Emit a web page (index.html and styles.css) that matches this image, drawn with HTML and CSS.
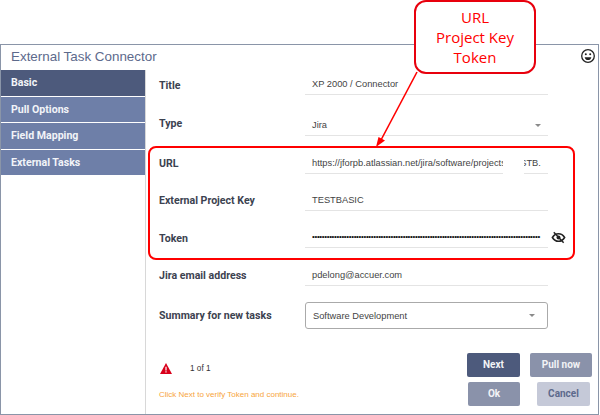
FILE: index.html
```html
<!DOCTYPE html>
<html lang="en">
<head>
<meta charset="utf-8">
<title>External Task Connector</title>
<link rel="stylesheet" href="styles.css">
</head>
<body>
<div class="dialog">
  <header class="head">
    <h1 class="title">External Task Connector</h1>
    <svg class="smile" viewBox="0 0 16 16" aria-hidden="true"><circle cx="8" cy="8" r="6.300" fill="none" stroke="#222" stroke-width="1.300"/><circle cx="5.800" cy="6.200" r="1" fill="#222"/><circle cx="10.200" cy="6.200" r="1" fill="#222"/><path d="M4.600 9.200h6.800c-.5 1.900-1.800 2.900-3.400 2.900s-2.900-1-3.400-2.900z" fill="#222"/></svg>
  </header>
  <div class="body">
    <nav class="side">
      <div class="tab tab-active">Basic</div>
      <div class="tab">Pull Options</div>
      <div class="tab">Field Mapping</div>
      <div class="tab">External Tasks</div>
    </nav>
    <main class="main">
      <div class="row row-title"><span class="label">Title</span><div class="field">XP 2000 / Connector</div></div>
      <div class="row row-type"><span class="label">Type</span><div class="field">Jira<i class="caret"></i></div></div>
      <div class="row row-url"><span class="label">URL</span><div class="field field-url"><span class="clip">https://jforpb.atlassian.net/jira/software/projects/TESTB.</span><i class="patch"></i></div></div>
      <div class="row"><span class="label">External Project Key</span><div class="field">TESTBASIC</div></div>
      <div class="row row-token"><span class="label">Token</span><div class="field"><span class="clip dots">•••••••••••••••••••••••••••••••••••••••••••••••••••••••••••••••••••••••••••••••••••••••••••••</span>
        <svg class="eye" viewBox="0 0 16 16" aria-hidden="true"><path d="M1.500 8c1.600-2.700 3.800-4 6.500-4s4.900 1.300 6.500 4c-1.600 2.700-3.800 4-6.500 4S3.100 10.700 1.500 8z" fill="none" stroke="#222" stroke-width="1.700"/><circle cx="8" cy="8" r="2.100" fill="#222"/><path d="M3 2.500l10.500 11" stroke="#222" stroke-width="1.600"/></svg></div></div>
      <div class="row row-email"><span class="label">Jira email address</span><div class="field">pdelong@accuer.com</div></div>
      <div class="row row-summary"><span class="label">Summary for new tasks</span><div class="select">Software Development<i class="caret"></i></div></div>
      <footer class="foot">
        <div class="status">
          <div class="count">
            <svg class="warn" viewBox="0 0 12 11" aria-hidden="true"><path d="M6 0l6 11H0z" fill="#d9001b"/><path d="M5.400 3.800h1.200v3.700H5.400zM5.400 8.200h1.200v1.200H5.400z" fill="#fff"/></svg>
            <span>1 of 1</span>
          </div>
          <p class="hint">Click Next to verify Token and continue.</p>
        </div>
        <div class="buttons">
          <button class="btn btn-next">Next</button>
          <button class="btn btn-pull">Pull now</button>
          <button class="btn btn-ok">Ok</button>
          <button class="btn btn-cancel">Cancel</button>
        </div>
      </footer>
    </main>
  </div>
</div>
<div class="redbox"></div>
<svg class="arrow" viewBox="0 0 600 415" aria-hidden="true"><path d="M417 72L381 140" stroke="#f00" stroke-width="1.600" fill="none"/><path d="M376 147l2.500-10 6.500 3.500z" fill="#f00"/></svg>
<div class="callout">URL<br>Project Key<br>Token</div>
</body>
</html>
```
FILE: styles.css
```css
* { box-sizing: border-box; }
html, body { margin: 0; padding: 0; width: 600px; height: 415px; overflow: hidden; background: #fff; }
body { font-family: "Liberation Sans", Arial, sans-serif; color: #333; padding-top: 44px; }
.dialog { width: 599px; height: 371px; border: 1px solid #8a95a8; display: flex; flex-direction: column; }
.head { height: 25px; display: flex; align-items: flex-start; justify-content: space-between; padding: 2px 2px 0 10px; flex: none; }
.title { margin: 0; font: 400 13.400px/19px "Liberation Sans", Arial, sans-serif; color: #5d6a8c; }
.smile { width: 16px; height: 16px; margin-top: 1px; }
.body { flex: 1; display: flex; min-height: 0; }
.side { width: 144px; flex: none; display: flex; flex-direction: column; gap: 1px; }
.tab { height: 25.600px; background: #6e7fa8; color: #f2f4f8; font: 700 10.600px/26px Roboto, sans-serif; padding-left: 10px; }
.tab-active { background: #4d5a7c; }
.main { flex: 1; border-left: 1px solid #d8d8d8; padding: 1px 0 0 13px; display: flex; flex-direction: column; position: relative; }
.row { display: flex; align-items: center; margin-top: 13px; height: 24px; }
.row-title { margin-top: 0; }
.row-type { margin-top: 17px; }
.row-url { margin-top: 14px; }
.row-email { margin-top: 14px; }
.row-summary { margin-top: 16px; height: 27px; }
.label { width: 146px; flex: none; font: 700 10.600px/14px Roboto, sans-serif; color: #3c4250; padding-top: 3px; }
.row-title .label { padding-top: 5px; }
.row-type .label { padding-top: 0; }
.row-token .label { padding-top: 5px; }
.row-summary .label { padding-top: 0; }
.field { width: 243px; height: 24px; border-bottom: 1px solid #e4e4e4; padding: 3px 7px 0; font-size: 9.300px; line-height: 20px; color: #444; display: flex; align-items: center; justify-content: space-between; position: relative; }
.clip { display: block; width: 229px; white-space: nowrap; }
.dots { font-size: 8px; letter-spacing: -.35px; color: #111; overflow: hidden; }
.patch { position: absolute; left: 198px; top: 2px; width: 21px; height: 23px; background: #fff; }
.eye { position: absolute; left: 246px; top: 6px; width: 15px; height: 15px; }
.caret { width: 0; height: 0; border: 3px solid transparent; border-top: 3.500px solid #8a8a8a; border-bottom: 0; }
.select { width: 243px; height: 27px; border: 1px solid #aaa; border-radius: 3px; padding: 0 12px 0 7px; font-size: 9.300px; color: #444; display: flex; align-items: center; justify-content: space-between; }
.foot { display: flex; justify-content: space-between; margin-top: 24px; }
.status { padding-top: 8px; }
.count { display: flex; align-items: center; gap: 18px; font-size: 8.200px; color: #333; padding-left: 1px; height: 14px; }
.warn { width: 12px; height: 11px; }
.hint { margin: 14px 0 0; font-size: 8px; line-height: 11px; color: #f7a540; white-space: nowrap; }
.buttons { display: grid; grid-template-columns: 53px 62px; column-gap: 10px; row-gap: 5px; width: 125px; margin-right: 6px; }
.btn { height: 24px; border: 0; border-radius: 2px; padding: 0; color: #f2f3f6; font: 700 10px/24px Roboto, sans-serif; }
.btn-next { background: #4d5a7c; }
.btn-pull { background: #8a92aa; }
.btn-ok { background: #8a92aa; margin-left: 1px; }
.btn-cancel { background: #c5c9d8; color: #5d6a8c; width: 53px; margin-left: 7px; }
.redbox { position: absolute; left: 148px; top: 146px; width: 427px; height: 114px; border: 2px solid #f00; border-radius: 8px; }
.arrow { position: absolute; left: 0; top: 0; width: 600px; height: 415px; }
.callout { position: absolute; left: 414px; top: 0; width: 122px; height: 74px; background: #fff; border: 2px solid #e8000d; border-radius: 12px; color: #f00; font: 400 15px/20px "Open Sans", sans-serif; text-align: center; padding-top: 5px; }
```
